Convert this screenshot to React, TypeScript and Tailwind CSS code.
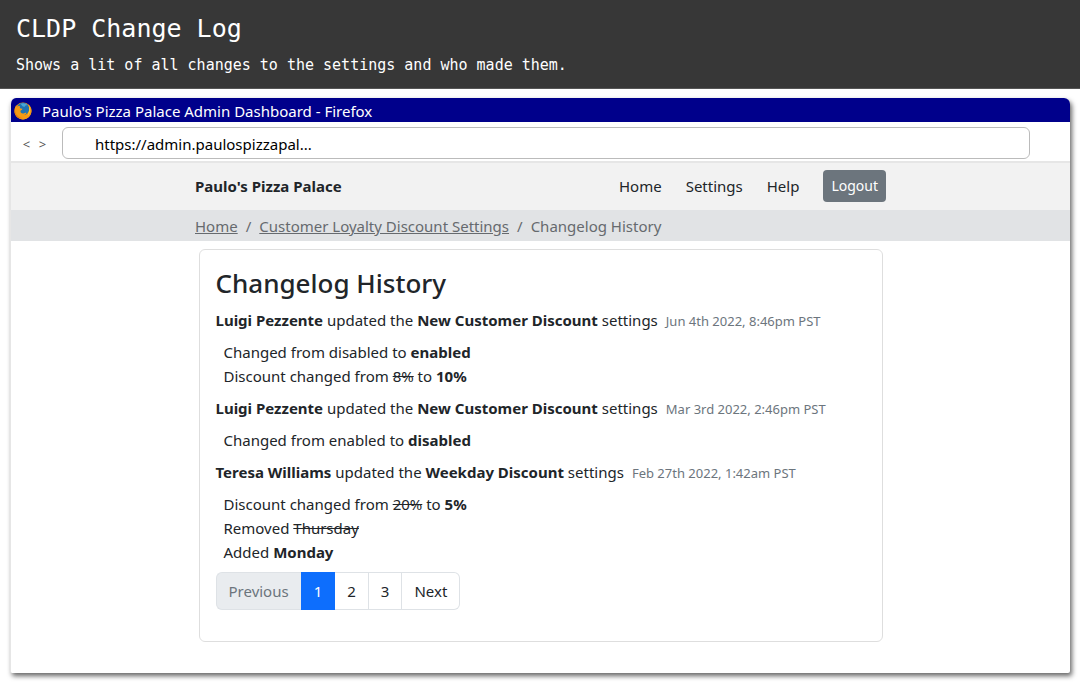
import type { ReactNode } from "react";

type Entry = {
  who: string;
  what: string;
  when: string;
  changes: ReactNode[];
};

const entries: Entry[] = [
  {
    who: "Luigi Pezzente",
    what: "New Customer Discount",
    when: "Jun 4th 2022, 8:46pm PST",
    changes: [
      <>Changed from disabled to <b className="font-bold">enabled</b></>,
      <>Discount changed from <s>8%</s> to <b className="font-bold">10%</b></>,
    ],
  },
  {
    who: "Luigi Pezzente",
    what: "New Customer Discount",
    when: "Mar 3rd 2022, 2:46pm PST",
    changes: [<>Changed from enabled to <b className="font-bold">disabled</b></>],
  },
  {
    who: "Teresa Williams",
    what: "Weekday Discount",
    when: "Feb 27th 2022, 1:42am PST",
    changes: [
      <>Discount changed from <s>20%</s> to <b className="font-bold">5%</b></>,
      <>Removed <s>Thursday</s></>,
      <>Added <b className="font-bold">Monday</b></>,
    ],
  },
];

function FirefoxIcon() {
  return (
    <svg viewBox="0 0 18 18" className="size-[18px] shrink-0" aria-hidden="true">
      <circle cx="9" cy="9" r="8.5" fill="#f0920f" />
      <circle cx="9" cy="7" r="6.2" fill="#1f74b3" />
      <path d="M6.5 1.800c2.600-1.100 5.300-.5 6.900 1.400-1.600-.1-2.700.5-2.900 1.800L8.500 4.300z" fill="#4aa6d6" />
      <path d="M14.200 2.300c2.100 1.500 3.400 4 3.300 6.700-.2 4.800-3.900 8.500-8.500 8.500-4.700 0-8.500-3.800-8.500-8.500C.5 6.300 1.300 4.200 2.500 3l.3 1.700c1-.7 2.200-.8 3.300-.2-.5.700-.3 1.500.4 1.900l1.900.4c-.2 1.100-1.200 1.400-1.900 1.900-.4 1.900 1.200 3 2.900 2.700 1.400-.2 2-.9 3-.5-.5 1.300-1.700 2.100-3 2.300 3.400.5 5.800-2 5.800-5.300 0-2.100-.3-3.900-1-5.600z" fill="#f59b14" />
      <path d="M15.200 3.800c1.700 3.200 1.300 7.400-1.600 9.900 1.400-2.800 2-6.300 1.600-9.900z" fill="#ffcf3a" />
      <path d="M1 7.500c-.2 4.600 3.300 8.200 7.800 8.600-3.900 1-7.800-1.900-8.200-5.700z" fill="#e57a0a" />
    </svg>
  );
}

export default function App() {
  return (
    <div className="font-['Noto_Sans','Open_Sans',sans-serif] text-[15px] leading-6 text-[#212529]">
      <header className="border-b border-[#555] bg-[#373737] px-4 pt-[13px] pb-[11px] font-['DejaVu_Sans_Mono','Liberation_Mono',monospace] text-white">
        <h1 className="text-[25px] leading-8">CLDP Change Log</h1>
        <p className="mt-2 text-[15px] leading-6">Shows a lit of all changes to the settings and who made them.</p>
      </header>

      <main className="mx-2.5 mt-[9px] mb-2.5 overflow-hidden rounded-t-md rounded-b-xs border-l border-[#e6e6e6] bg-white shadow-[2px_3px_5px_rgba(0,0,0,0.6)]">
        <div className="flex items-center gap-2.5 bg-[#00008b] pt-0.5 pl-[3px] text-white">
          <FirefoxIcon />
          <span className="leading-[22px]">Paulo's Pizza Palace Admin Dashboard - Firefox</span>
        </div>

        <div className="flex items-center border-b-2 border-[#e6e6e6] pt-[5px] pb-0.5">
          <div className="flex w-[51px] shrink-0 justify-center gap-1 pt-0.5 pr-1 text-[13px] text-[#555]">
            <button type="button" aria-label="Back" className="w-3">&lt;</button>
            <button type="button" aria-label="Forward" className="w-3">&gt;</button>
          </div>
          <input
            aria-label="Address"
            readOnly
            value="https://admin.paulospizzapal..."
            className="mr-10 h-8 min-w-0 flex-1 rounded-md border border-[#bbb] bg-white pt-1 pr-2 pb-0.5 pl-8 text-black"
          />
        </div>

        <nav className="bg-[#f2f2f2]">
          <div className="mx-auto flex max-w-[691px] items-center pt-[7px] pb-2">
            <span className="mr-auto font-bold">Paulo's Pizza Palace</span>
            <div className="flex items-center gap-6">
              <a href="#home">Home</a>
              <a href="#settings">Settings</a>
              <a href="#help">Help</a>
              <button type="button" className="h-8 rounded bg-[#6c757d] px-2 text-[14px] text-white">Logout</button>
            </div>
          </div>
        </nav>

        <nav aria-label="Breadcrumb" className="bg-[#e1e3e5] text-[#666a6e]">
          <ol className="mx-auto flex max-w-[691px] gap-2 pt-1 pb-[3px]">
            <li><a href="#home" className="underline">Home</a></li>
            <li aria-hidden="true">/</li>
            <li><a href="#settings" className="underline">Customer Loyalty Discount Settings</a></li>
            <li aria-hidden="true">/</li>
            <li aria-current="page">Changelog History</li>
          </ol>
        </nav>

        <section className="mx-auto mt-2 mb-[31px] max-w-[684px] rounded-md border border-[#dedede] px-4 pt-4 pb-[31px]">
          <h2 className="mb-2 text-[26px] leading-[34px] font-medium">Changelog History</h2>
          {entries.map((entry) => (
            <article key={entry.when}>
              <p className="whitespace-nowrap">
                <b className="font-bold">{entry.who}</b> updated the <b className="font-bold">{entry.what}</b> settings
                <time className="ml-2 text-[13px] leading-4 text-[#6c757d]">{entry.when}</time>
              </p>
              <ul className="my-2 pl-2">
                {entry.changes.map((change, i) => (
                  <li key={i}>{change}</li>
                ))}
              </ul>
            </article>
          ))}
          <nav aria-label="Pages" className="flex">
            <button type="button" disabled className="rounded-l-md border-y border-l border-[#dee2e6] bg-[#e9ecef] px-3 py-1.5 text-[#6c757d]">Previous</button>
            <button type="button" aria-current="page" className="border border-[#0d6efd] bg-[#0d6efd] px-3 py-1.5 text-white">1</button>
            <button type="button" className="border-y border-r border-[#dee2e6] px-3 py-1.5">2</button>
            <button type="button" className="border-y border-r border-[#dee2e6] px-3 py-1.5">3</button>
            <button type="button" className="rounded-r-md border-y border-r border-[#dee2e6] px-3 py-1.5">Next</button>
          </nav>
        </section>
      </main>
    </div>
  );
}
